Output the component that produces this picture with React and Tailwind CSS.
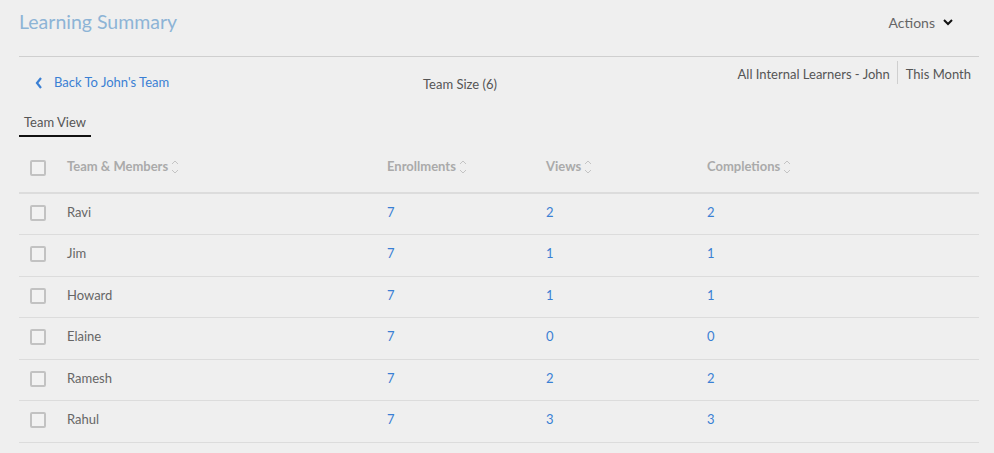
import React from 'react';

const rows = [
  { name: 'Ravi', enrollments: 7, views: 2, completions: 2 },
  { name: 'Jim', enrollments: 7, views: 1, completions: 1 },
  { name: 'Howard', enrollments: 7, views: 1, completions: 1 },
  { name: 'Elaine', enrollments: 7, views: 0, completions: 0 },
  { name: 'Ramesh', enrollments: 7, views: 2, completions: 2 },
  { name: 'Rahul', enrollments: 7, views: 3, completions: 3 },
];

function SortIcon() {
  return (
    <svg width="10" height="18" viewBox="0 0 10 18" className="ml-[2px]" fill="none" stroke="#c4c4c4" strokeWidth="1">
      <path d="M2 6 L5 3 L8 6" />
      <path d="M2 12 L5 15 L8 12" />
    </svg>
  );
}

function Checkbox() {
  return <div className="w-[16px] h-[16px] border-2 border-[#c2c2c2] rounded-[2px] bg-[#f2f2f2]" />;
}

export default function App() {
  return (
    <div className="min-h-[453px] bg-[#efefef] pl-[19px] pr-[15px] text-[13px] text-[#555]" style={{ fontFamily: 'Lato, "Open Sans", sans-serif' }}>
      {/* Header */}
      <div className="flex items-center justify-between h-[44px]">
        <h1 className="text-[19.5px] text-[#8db4d6] font-normal">Learning Summary</h1>
        <div className="flex items-center gap-[8px] pr-[26px] text-[#666] text-[14px]">
          Actions
          <svg width="10" height="8" viewBox="0 0 10 8" fill="none" stroke="#111" strokeWidth="2">
            <path d="M1 2 L5 6 L9 2" />
          </svg>
        </div>
      </div>
      <div className="border-t border-[#cfcfcf] mt-[12px]" />

      {/* Sub header */}
      <div className="flex h-[56px]">
        <a className="flex items-center gap-[11px] w-[404px] text-[#3a7fd4] mt-[16px] h-[20px] pl-[16px]">
          <svg width="8" height="12" viewBox="0 0 8 12" fill="none" stroke="#3a7fd4" strokeWidth="2.2">
            <path d="M6 1 L2 6 L6 11" />
          </svg>
          Back To John's Team
        </a>
        <div className="mt-[18px] text-[#555]">Team Size (6)</div>
        <div className="flex items-start ml-auto mt-[4px] text-[#555]">
          <div className="pt-[4px] pr-[7px]">All Internal Learners - John</div>
          <div className="w-[1px] h-[23px] bg-[#cfcfcf]" />
          <div className="pt-[4px] pl-[8px] pr-[8px]">This Month</div>
        </div>
      </div>

      {/* Tab */}
      <div className="flex">
        <div className="px-[5px] pb-[2px] border-b-2 border-[#111] text-[#555]">Team View</div>
      </div>

      {/* Table */}
      <div className="w-[960px] mt-[9px]">
        <div className="flex items-center h-[48px] pb-[3px] border-b-2 border-[#dcdcdc] font-bold text-[#aaa]">
          <div className="w-[48px] pl-[11px] pt-[1px]"><Checkbox /></div>
          <div className="w-[320px] flex items-center">Team &amp; Members<SortIcon /></div>
          <div className="w-[159px] flex items-center">Enrollments<SortIcon /></div>
          <div className="w-[161px] flex items-center">Views<SortIcon /></div>
          <div className="flex items-center">Completions<SortIcon /></div>
        </div>
        {rows.map((r) => (
          <div key={r.name} className="flex items-center h-[41.5px] pb-[3px] border-b border-[#dcdcdc]">
            <div className="w-[48px] pl-[11px] pt-[1px]"><Checkbox /></div>
            <div className="w-[320px] text-[#666]">{r.name}</div>
            <div className="w-[159px] text-[#3a7fd4]">{r.enrollments}</div>
            <div className="w-[161px] text-[#3a7fd4]">{r.views}</div>
            <div className="text-[#3a7fd4]">{r.completions}</div>
          </div>
        ))}
      </div>
    </div>
  );
}
